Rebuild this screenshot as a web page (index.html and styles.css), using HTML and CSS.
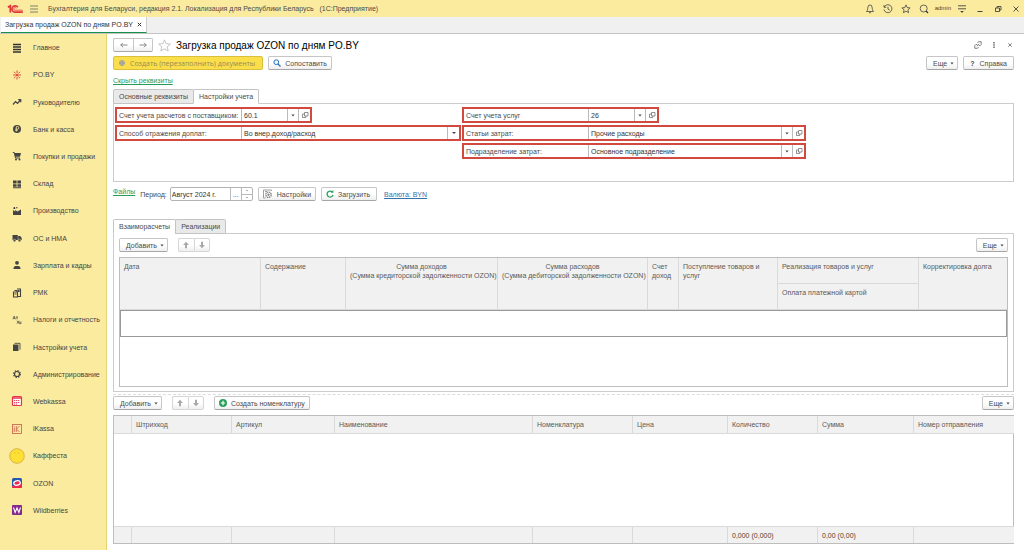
FILE: index.html
```html
<!DOCTYPE html>
<html lang="ru">
<head>
<meta charset="utf-8">
<title>Загрузка продаж OZON по дням PO.BY</title>
<link rel="stylesheet" href="styles.css">
</head>
<body>
<svg class="sprite" aria-hidden="true">
  <symbol id="open" viewBox="0 0 8 8"><path d="M3.500 1.500h3.500v3.500h-3.500zM3.500 3H1.500v3.500h3.300V5" fill="none" stroke="#666" stroke-width=".7"/></symbol>
  <symbol id="caret" viewBox="0 0 4 3"><path d="M.4 .6h3.200L2 2.600z" fill="#444"/></symbol>
  <symbol id="up" viewBox="0 0 8 8"><path d="M4 .8 7 4H5v3.200H3V4H1z" fill="#a9a9a9"/></symbol>
  <symbol id="down" viewBox="0 0 8 8"><path d="M4 7.200 7 4H5V.8H3V4H1z" fill="#a9a9a9"/></symbol>
</svg>

<header class="topbar">
  <svg class="logo" viewBox="0 0 16 10"><g fill="none" stroke="#e0353a" stroke-width="1.700"><path d="M.8 3.200 3.300 1.800V8.500"/><path d="M10.800 3.300A3.200 3.200 0 1 0 8 8.200H15.800"/><path d="M9.200 4.400A1.300 1.300 0 1 0 8 6.200H15.800" stroke-width=".8"/></g></svg>
  <button class="flat" aria-label="Меню"><svg class="ic8" viewBox="0 0 8 8"><path d="M0 1h8M0 4h8M0 7h8" stroke="#666" stroke-width=".8"/></svg></button>
  <span class="app-name">Бухгалтерия для Беларуси, редакция 2.1. Локализация для Республики Беларусь &nbsp; (1С:Предприятие)</span>
  <div class="topbar-tools">
    <button class="flat" aria-label="Уведомления"><svg class="ic10" viewBox="0 0 10 10"><path d="M1.500 7.500C3 6 2.500 4.500 3 3a2 2 0 0 1 4 0c.5 1.500 0 3 1.500 4.500zM4 8.700h2" fill="none" stroke="#444" stroke-width=".8"/></svg></button>
    <button class="flat" aria-label="История"><svg class="ic10" viewBox="0 0 10 10"><path d="M1.300 3A4 4 0 1 1 1 5.500M1 1v2.300h2.300M5 2.800V5.200l1.700 1" fill="none" stroke="#444" stroke-width=".8"/></svg></button>
    <button class="flat" aria-label="Избранное"><svg class="ic10" viewBox="0 0 10 10"><path d="m5 .9 1.200 2.700 2.900.3-2.200 1.900.7 2.900L5 7.200 2.400 8.700l.7-2.900L.9 3.900l2.900-.3z" fill="none" stroke="#444" stroke-width=".8"/></svg></button>
    <button class="flat" aria-label="Поиск"><svg class="ic10" viewBox="0 0 10 10"><circle cx="4.700" cy="4.500" r="3.500" fill="none" stroke="#444" stroke-width=".8"/><path d="m7 7 2 2" stroke="#333" stroke-width="1.300"/></svg></button>
    <span class="user">admin</span>
    <button class="flat" aria-label="Настройки панели"><svg class="ic10" viewBox="0 0 10 10"><path d="M1 1.800h8M1 4.800h8" stroke="#444" stroke-width=".9"/><path d="M3.200 7h3.600L5 9z" fill="#444"/></svg></button>
    <button class="flat" aria-label="Свернуть"><svg class="ic10" viewBox="0 0 10 10"><path d="M2.500 7.500h5" stroke="#444"/></svg></button>
    <button class="flat" aria-label="Восстановить"><svg class="ic10" viewBox="0 0 10 10"><path d="M2.500 4h4v3.500h-4zM4 4V2.500h4V6H6.500" fill="none" stroke="#444" stroke-width=".9"/></svg></button>
    <button class="flat" aria-label="Закрыть окно"><svg class="ic10" viewBox="0 0 10 10"><path d="m2.500 2.500 5 5m0-5-5 5" stroke="#444" stroke-width=".9"/></svg></button>
  </div>
</header>

<nav class="window-tabs">
  <div class="window-tab"><span>Загрузка продаж OZON по дням PO.BY</span><button class="flat" aria-label="Закрыть вкладку"><svg class="ic5" viewBox="0 0 5 5"><path d="m.8.8 3.400 3.400m0-3.400L.8 4.200" stroke="#333" stroke-width="1"/></svg></button></div>
</nav>

<div class="workspace">
  <nav class="sidebar">
    <a href="#"><svg viewBox="0 0 16 16"><path d="M4 4.500h8M4 7h8M4 9.500h8M4 12h8" stroke="#333" stroke-width="1.300"/></svg>Главное</a>
    <a href="#"><svg viewBox="0 0 16 16"><path d="M8 3.500v2.700M8 9.800v2.700M4 8h8M5 4.800l1.700 1.700M9.300 9.500l1.700 1.700M11 4.800 9.300 6.500M6.700 9.500 5 11.200" stroke="#d8392f" stroke-width=".9"/><circle cx="8" cy="8" r="1" fill="#d8392f"/></svg>PO.BY</a>
    <a href="#"><svg viewBox="0 0 16 16"><path d="m4 10.500 2.500-3 2 1.800L11.500 6M9.200 5.700h2.500v2.500" fill="none" stroke="#444" stroke-width="1.200"/></svg>Руководителю</a>
    <a href="#"><svg viewBox="0 0 16 16"><circle cx="8" cy="8" r="4" fill="#444"/><path d="M7.300 10.500v-5h1.200a1.300 1.300 0 0 1 0 2.700H6.300M6.300 9.300h2.500" fill="none" stroke="#fbeb9f" stroke-width=".8"/></svg>Банк и касса</a>
    <a href="#"><svg viewBox="0 0 16 16"><path d="M3.800 4.500h1.400L6.500 10H11" fill="none" stroke="#444"/><path d="M5.300 5H12l-1 3.800H6.300z" fill="#444"/><circle cx="7" cy="11.500" r="1" fill="#444"/><circle cx="10.500" cy="11.500" r="1" fill="#444"/></svg>Покупки и продажи</a>
    <a href="#"><svg viewBox="0 0 16 16"><path d="M4 4.500h3.600v3H4zM8.400 4.500H12v3H8.400zM4 8.200h3.600v2.600H4zM8.400 8.200H12v2.600H8.400zM4 11.300h8v.9H4z" fill="#444"/></svg>Склад</a>
    <a href="#"><svg viewBox="0 0 16 16"><path d="M4 12V7l2.200 1.500V7l2.300 1.500L11 7l1-.5V12zM4.300 6l.5-2H6l.3 2zM7 4.300h1.500v1H7z" fill="#444"/></svg>Производство</a>
    <a href="#"><svg viewBox="0 0 16 16"><path d="M3.500 5h5.300v5H3.500zM9.200 6h2l1.500 2v2H9.200z" fill="#444"/><g fill="#444" stroke="#fbeb9f" stroke-width=".5"><circle cx="5.500" cy="10.500" r="1.300"/><circle cx="10.500" cy="10.500" r="1.300"/></g></svg>ОС и НМА</a>
    <a href="#"><svg viewBox="0 0 16 16"><circle cx="8" cy="5.800" r="1.900" fill="#444"/><path d="M4.500 12c0-3 1.500-3 3.500-3s3.500 0 3.500 3z" fill="#444"/></svg>Зарплата и кадры</a>
    <a href="#"><svg viewBox="0 0 16 16"><path d="M4.500 7h4v5h-4zM5.500 5.500H8V7M8 4h3.500v7.500h-3" fill="none" stroke="#444" stroke-width="1.100"/><path d="M5.500 8.500h2v1h-2zM8.800 5h1.800v2H8.800z" fill="#444"/></svg>РМК</a>
    <a href="#"><svg viewBox="0 0 16 16"><path d="M4 7.300 5.200 4l1.200 3.300M4.300 6.300h1.800M7 5h2M8 5v2.300M8 8.700l2 3M10 8.700l-2 3M10.700 9.500v2.200M12 9.500v2.200h-1.300" fill="none" stroke="#444" stroke-width=".7"/></svg>Налоги и отчетность</a>
    <a href="#"><svg viewBox="0 0 16 16"><path d="M4 5.500h5.500V12H4z" fill="#444"/><path d="M5.500 4.300H11v6.400" fill="none" stroke="#444" stroke-width=".9"/></svg>Настройки учета</a>
    <a href="#"><svg viewBox="0 0 16 16"><circle cx="8" cy="8" r="2.500" fill="none" stroke="#444" stroke-width="1.200"/><circle cx="8" cy="8" r="3.400" fill="none" stroke="#444" stroke-width="1.200" stroke-dasharray="1.340 1.330"/></svg>Администрирование</a>
    <a href="#"><svg viewBox="0 0 16 16"><rect x="3.500" y="3.500" width="9" height="9" rx="1" fill="#fff" stroke="#e6334d" stroke-width="1.200"/><path d="M3.500 5h9" stroke="#e6334d" stroke-width="1.500"/><path d="M5 7.500h6M5 9.500h6M5 11h4" stroke="#e6334d" stroke-width=".9" stroke-dasharray="1.300 .7"/></svg>Webkassa</a>
    <a href="#"><svg viewBox="0 0 16 16"><rect x="3.500" y="3.500" width="9" height="9" fill="#fbeb9f" stroke="#cd6a52" stroke-width=".9"/><path d="M5.300 6.500V11M5.300 5v.7M7.300 5v6M10.500 5 7.500 8l3 3" fill="none" stroke="#cd6a52" stroke-width=".9"/></svg>iKassa</a>
    <a href="#"><svg viewBox="0 0 16 16"><circle cx="8" cy="8" r="7.300" fill="#fde033" stroke="#d3a343" stroke-width=".8"/><path d="M6 4.500v.8M9.500 4.500v.8" stroke="#c99a2e" stroke-width=".8"/></svg>Каффеста</a>
    <a href="#"><svg viewBox="0 0 16 16"><rect x="3" y="3" width="10" height="10" rx="1.500" fill="#2458b5"/><path d="M3 11 13 8v3.500A1.500 1.500 0 0 1 11.500 13h-7A1.500 1.500 0 0 1 3 11.500z" fill="#ef2850"/><ellipse cx="8" cy="8" rx="3.300" ry="2.200" fill="#ef2850" stroke="#fff" stroke-width="1.300" transform="rotate(-12 8 8)"/></svg>OZON</a>
    <a href="#"><svg viewBox="0 0 16 16"><rect x="3" y="3" width="10" height="10" rx="1" fill="#842a8d"/><path d="m4.500 5.500 1.600 5L8 6l1.900 4.500 1.600-5" fill="none" stroke="#fff" stroke-width="1.100"/></svg>Wildberries</a>
  </nav>

  <main class="form">
    <div class="row title-row">
      <div class="pair">
        <button class="btn" aria-label="Назад"><svg class="ic8" viewBox="0 0 8 8"><path d="M7.500 4h-7M3 1.800.8 4 3 6.200" fill="none" stroke="#888"/></svg></button>
        <button class="btn" aria-label="Вперед"><svg class="ic8" viewBox="0 0 8 8"><path d="M.5 4h7M5 1.800 7.200 4 5 6.200" fill="none" stroke="#888"/></svg></button>
      </div>
      <button class="flat" aria-label="В избранное"><svg class="ic12" viewBox="0 0 12 12"><path d="m6 .8 1.500 3.500 3.900.4-2.900 2.500.9 3.900L6 9.100l-3.400 2 .9-3.900L.6 4.700l3.900-.4z" fill="#fff" stroke="#bbb" stroke-width=".8"/></svg></button>
      <h1>Загрузка продаж OZON по дням PO.BY</h1>
      <div class="title-tools">
        <button class="flat" aria-label="Ссылка"><svg class="ic8" viewBox="0 0 8 8"><path d="M3.500 2 4.500 .7h2.700v2.700L6.200 4.700H4.700M4.500 6 3.500 7.300H.8V4.500l1-1h1.500M2.800 5.200l2.400-2.400" fill="none" stroke="#666" stroke-width=".8"/></svg></button>
        <button class="flat" aria-label="Действия"><svg class="ic8" viewBox="0 0 8 8"><path d="M4 1v1.400M4 3.300v1.400M4 5.600V7" stroke="#555" stroke-width="1.300"/></svg></button>
        <button class="flat" aria-label="Закрыть"><svg class="ic8" viewBox="0 0 8 8"><path d="m2.300 2.300 3.400 3.400m0-3.400L2.300 5.700" stroke="#666" stroke-width=".8"/></svg></button>
      </div>
    </div>

    <div class="row command-row">
      <button class="btn primary"><svg class="ic8" viewBox="0 0 8 8"><path d="M2.500 1h3v1.500H7v3H5.500V7h-3V5.500H1v-3h1.500z" fill="#a9a799"/></svg>Создать (перезаполнить) документы</button>
      <button class="btn"><svg class="ic8" viewBox="0 0 8 8"><circle cx="3.300" cy="3.200" r="2.400" fill="#eaf4ff" stroke="#2873b8"/><path d="m5 5 2.500 2.500" stroke="#2873b8" stroke-width="1.300"/></svg>Сопоставить</button>
      <span class="spacer"></span>
      <button class="btn menu">Еще<svg class="caret"><use href="#caret"/></svg></button>
      <button class="btn help"><b>?</b>Справка</button>
    </div>

    <a class="link green toggle" href="#">Скрыть реквизиты</a>

    <div class="tabs" role="tablist">
      <button class="tab" role="tab">Основные реквизиты</button>
      <button class="tab active" role="tab" aria-selected="true">Настройки учета</button>
    </div>
    <section class="panel settings">
      <div class="field short"><label for="f1">Счет учета расчетов с поставщиком:</label><input id="f1" value="60.1"><button aria-label="Выбрать"><svg class="caret"><use href="#caret"/></svg></button><button aria-label="Открыть"><svg class="ic8"><use href="#open"/></svg></button></div>
      <div class="field short"><label for="f2">Счет учета услуг</label><input id="f2" value="26"><button aria-label="Выбрать"><svg class="caret"><use href="#caret"/></svg></button><button aria-label="Открыть"><svg class="ic8"><use href="#open"/></svg></button></div>
      <div class="field"><label for="f3">Способ отражения доплат:</label><select id="f3"><option>Во внер.доход/расход</option></select></div>
      <div class="field"><label for="f4">Статьи затрат:</label><input id="f4" value="Прочие расходы"><button aria-label="Выбрать"><svg class="caret"><use href="#caret"/></svg></button><button aria-label="Открыть"><svg class="ic8"><use href="#open"/></svg></button></div>
      <div class="field second"><label for="f5">Подразделение затрат:</label><input id="f5" value="Основное подразделение"><button aria-label="Выбрать"><svg class="caret"><use href="#caret"/></svg></button><button aria-label="Открыть"><svg class="ic8"><use href="#open"/></svg></button></div>
    </section>

    <div class="row period-row">
      <a class="link green" href="#">Файлы</a>
      <label for="period">Период:</label>
      <div class="period"><input id="period" value="Август 2024 г."><button aria-label="Выбрать период">...</button><div class="spin"><button aria-label="Больше"><svg class="caret" viewBox="0 0 4 3"><path d="M1 2h2L2 1z" fill="#666"/></svg></button><button aria-label="Меньше"><svg class="caret" viewBox="0 0 4 3"><path d="M1 1h2L2 2z" fill="#666"/></svg></button></div></div>
      <button class="btn"><svg class="ic10" viewBox="0 0 10 10"><path d="M.5 1h8v1M.5 1v8h2M2 2.500h2" fill="none" stroke="#888" stroke-width=".8"/><circle cx="5.500" cy="5.700" r="2.700" fill="none" stroke="#777" stroke-width="1.200" stroke-dasharray="1.500 .6"/><circle cx="5.500" cy="5.700" r="1.100" fill="#777"/></svg>Настройки</button>
      <button class="btn load"><svg class="ic8" viewBox="0 0 8 8"><path d="M6.300 2A3 3 0 1 0 7 4.800" fill="none" stroke="#28a05a" stroke-width="1.300"/><path d="M4.600 2.800h2.800V0z" fill="#28a05a"/></svg>Загрузить</button>
      <a class="link blue" href="#">Валюта: BYN</a>
    </div>

    <div class="tabs" role="tablist">
      <button class="tab active" role="tab" aria-selected="true">Взаиморасчеты</button>
      <button class="tab" role="tab">Реализации</button>
    </div>
    <section class="panel settlements">
      <div class="row">
        <button class="btn menu">Добавить<svg class="caret"><use href="#caret"/></svg></button>
        <div class="pair arrows"><button class="btn" aria-label="Вверх"><svg class="ic8"><use href="#up"/></svg></button><button class="btn" aria-label="Вниз"><svg class="ic8"><use href="#down"/></svg></button></div>
        <span class="spacer"></span>
        <button class="btn menu">Еще<svg class="caret"><use href="#caret"/></svg></button>
      </div>
      <div class="grid-frame">
        <table class="grid">
          <colgroup><col class="w141"><col class="w85"><col class="w152"><col class="w150"><col class="w31"><col class="w99"><col class="w141"><col class="w88"></colgroup>
          <thead>
            <tr><th rowspan="2">Дата</th><th rowspan="2">Содержание</th><th rowspan="2" class="center">Сумма доходов<br>(Сумма кредиторской задолженности OZON)</th><th rowspan="2" class="center">Сумма расходов<br>(Сумма дебиторской задолженности OZON)</th><th rowspan="2">Счет доход</th><th rowspan="2">Поступление товаров и услуг</th><th>Реализация товаров и услуг</th><th rowspan="2" class="last">Корректировка долга</th></tr>
            <tr><th>Оплата платежной картой</th></tr>
          </thead>
          <tbody><tr class="current"><td colspan="8"></td></tr></tbody>
        </table>
      </div>
    </section>

    <div class="splitter"></div>

    <div class="row items-row">
      <button class="btn menu">Добавить<svg class="caret"><use href="#caret"/></svg></button>
      <div class="pair arrows"><button class="btn" aria-label="Вверх"><svg class="ic8"><use href="#up"/></svg></button><button class="btn" aria-label="Вниз"><svg class="ic8"><use href="#down"/></svg></button></div>
      <button class="btn"><svg class="ic8" viewBox="0 0 8 8"><circle cx="4" cy="4" r="4" fill="#28a05a"/><path d="M4 1.800v4.400M1.800 4h4.400" stroke="#fff" stroke-width="1.200"/></svg>Создать номенклатуру</button>
      <span class="spacer"></span>
      <button class="btn menu">Еще<svg class="caret"><use href="#caret"/></svg></button>
    </div>
    <div class="grid-frame items">
      <table class="grid">
        <colgroup><col class="w18"><col class="w100"><col class="w103"><col class="w198"><col class="w100"><col class="w95"><col class="w90"><col class="w96"><col class="w100"></colgroup>
        <thead><tr><th></th><th>Штрихкод</th><th>Артикул</th><th>Наименование</th><th>Номенклатура</th><th>Цена</th><th>Количество</th><th>Сумма</th><th class="last">Номер отправления</th></tr></thead>
        <tbody><tr><td colspan="9"></td></tr></tbody>
        <tfoot><tr><td></td><td></td><td></td><td></td><td></td><td></td><td>0,000 (0,000)</td><td>0,00 (0,00)</td><td class="last"></td></tr></tfoot>
      </table>
    </div>
  </main>
</div>
</body>
</html>
```
FILE: styles.css
```css
* { box-sizing: border-box; }
body {
  margin: 0;
  height: 100vh;
  display: flex;
  flex-direction: column;
  font: 7px/9px "Liberation Sans", Arial, sans-serif;
  color: #4a4a4a;
  background: #fff;
  overflow: hidden;
}
button, input, select { font: inherit; color: inherit; margin: 0; }
svg { display: block; flex: none; }
.sprite { position: absolute; width: 0; height: 0; }
.ic5 { width: 5px; height: 5px; }
.ic8 { width: 8px; height: 8px; }
.ic10 { width: 10px; height: 10px; }
.ic12 { width: 13px; height: 13px; }
.caret { width: 4px; height: 3px; }
.flat { border: 0; padding: 0; background: none; }
.spacer { flex: 1; }

.topbar {
  display: flex;
  align-items: center;
  height: 17px;
  flex: none;
  padding: 0 3px 0 7px;
  background: #fbeb9f;
}
.logo { width: 16px; height: 10px; margin-right: 7px; }
.app-name { margin-left: 10px; }
.topbar-tools { margin-left: auto; display: flex; align-items: center; gap: 8px; }
.user { margin: 0 -2px; color: #5a3c28; font-size: 6px; }

.window-tabs {
  display: flex;
  height: 17px;
  flex: none;
  background: #f0f0f0;
  border-bottom: 1px solid #c4c4c4;
}
.window-tab {
  display: flex;
  align-items: center;
  gap: 4px;
  padding: 0 4px;
  margin-left: 1px;
  background: #fff;
  border-right: 1px solid #ccc;
  border-bottom: 1px solid #169048;
  color: #333;
}

.workspace { flex: 1; display: flex; min-height: 0; }
.sidebar {
  width: 107px;
  flex: none;
  display: flex;
  flex-direction: column;
  padding-bottom: 26px;
  background: #fbeb9f;
  border-right: 1px solid #e6d478;
}
.sidebar a {
  flex: 1;
  display: flex;
  align-items: center;
  gap: 8px;
  padding-left: 9px;
  color: #444;
  text-decoration: none;
  white-space: nowrap;
}
.sidebar svg { width: 16px; height: 16px; }

.form {
  flex: 1;
  min-width: 0;
  display: flex;
  flex-direction: column;
  padding: 4px 10px 6px 6px;
}
.row { display: flex; align-items: center; gap: 5px; flex: none; }
.btn {
  display: flex;
  align-items: center;
  justify-content: center;
  gap: 4px;
  height: 14px;
  padding: 0 4px;
  background: linear-gradient(#fff 50%, #efefef);
  border: 1px solid #c6c6c6;
  border-bottom-color: #a6a6a6;
  border-radius: 2px;
  white-space: nowrap;
}
.primary {
  padding: 0 7px 0 4px;
  background: #fbdf4a;
  border-color: #d9bf3c;
  color: #948a55;
  font-family: "Open Sans", "Liberation Sans", sans-serif;
}
.menu { gap: 3px; padding: 0 3px 0 6px; }
.help { gap: 5px; padding: 0 6px; }
.load { padding: 0 6px 0 4px; }
.pair { display: flex; }
.pair .btn { width: 20px; padding: 0; }
.pair .btn:first-child { border-radius: 2px 0 0 2px; border-right-width: 0; }
.pair .btn:last-child { border-radius: 0 2px 2px 0; }
.arrows { margin: 0 5px; }
.arrows .btn { width: 16px; border-color: #d6d6d6; }

h1 { margin: 0; font-size: 10px; line-height: 13px; font-weight: 400; color: #000; }
.title-tools { margin-left: auto; display: flex; gap: 8px; }
.command-row { margin-top: 4px; }
.link { text-decoration: underline; }
.green { color: #2a9a5b; }
.blue { color: #3671ab; }
.toggle { align-self: flex-start; margin: 6px 0 4px; }

.tabs { display: flex; flex: none; height: 15px; position: relative; z-index: 1; }
.tab {
  padding: 0 5px;
  background: #e9e9e9;
  border: 1px solid #c4c4c4;
  border-radius: 2px 2px 0 0;
}
.tab + .tab { margin-left: -1px; }
.tab.active { background: #fff; border-bottom-color: #fff; }
.panel { flex: none; margin-top: -1px; border: 1px solid #ccc; }

.settings {
  display: grid;
  grid-template-columns: minmax(0, 346px) minmax(0, 344px);
  grid-auto-rows: 16px;
  gap: 2px 1px;
  height: 79px;
  padding: 3px 1px;
}
.field {
  display: grid;
  grid-template-columns: 124px 1fr 11px 12px;
  border: 2px solid #d04a40;
  background: #fff;
}
.field.short { width: 197px; }
.second { grid-column: 2; }
.field label { padding-left: 2px; align-self: center; white-space: nowrap; }
.field input, .field select {
  min-width: 0;
  width: 100%;
  padding: 0 2px;
  border: 0;
  border-left: 1px solid #bbb;
  background: none;
  color: #333;
}
.field select {
  grid-column: 2 / -1;
  appearance: none;
  background: linear-gradient(#bbb, #bbb) right 11px top / 1px 100% no-repeat;
}
.field:has(select) { position: relative; }
.field:has(select)::after {
  content: "";
  position: absolute;
  right: 3px;
  top: 5px;
  border: 2px solid transparent;
  border-top-color: #444;
  border-bottom-width: 0;
}
.field button {
  display: flex;
  align-items: center;
  justify-content: center;
  padding: 0;
  border: 0;
  border-left: 1px solid #bbb;
  background: #fff;
}

.period-row { margin: 5px 0 18px; }
.period-row .green { align-self: flex-start; }
.period {
  display: flex;
  width: 83px;
  height: 14px;
  margin-left: -2px;
  border: 1px solid #b4b4b4;
  border-radius: 2px;
}
.period input { flex: 1; min-width: 0; border: 0; padding: 0 1px; background: none; color: #333; }
.period button { padding: 0; width: 11px; border: 0; border-left: 1px solid #bbb; background: none; }
.spin { display: flex; flex-direction: column; }
.spin button { flex: 1; display: flex; align-items: center; justify-content: center; }
.spin button + button { border-top: 1px solid #bbb; }
.period-row .blue { margin-left: 2px; }

.settlements { padding: 4px 5px; height: 159px; display: flex; flex-direction: column; gap: 5px; }
.grid-frame { flex: 1; min-height: 0; border: 1px solid #bdbdbd; }
.grid { width: 100%; table-layout: fixed; border-collapse: separate; border-spacing: 0; }
.grid th {
  height: 26px;
  padding: 4px;
  font-weight: 400;
  text-align: left;
  vertical-align: top;
  background: #f1f1f1;
  color: #5a5a5a;
  border-right: 1px solid #dadada;
  border-bottom: 1px solid #dadada;
}
.grid th.center { text-align: center; white-space: nowrap; }
.grid td { padding: 0 4px; }
.current td { height: 27px; border: 1px solid #999; }

.splitter { flex: none; margin: 2px 0 1px; border-top: 1px dashed #ddd; }
.items-row { margin-bottom: 5px; }
.items .grid { height: 100%; }
.items th { height: 17px; }
.items tfoot td {
  height: 17px;
  background: #f1f1f1;
  color: #5a3c28;
  border-top: 1px solid #dadada;
  border-right: 1px solid #dadada;
}
.grid th.last, .items tfoot td.last { border-right: 0; }

.w18 { width: 18px; }
.w31 { width: 31px; }
.w85 { width: 85px; }
.w88 { width: 88px; }
.w90 { width: 90px; }
.w95 { width: 95px; }
.w96 { width: 96px; }
.w99 { width: 99px; }
.w100 { width: 100px; }
.w103 { width: 103px; }
.w141 { width: 141px; }
.w150 { width: 150px; }
.w152 { width: 152px; }
.w198 { width: 198px; }
```
